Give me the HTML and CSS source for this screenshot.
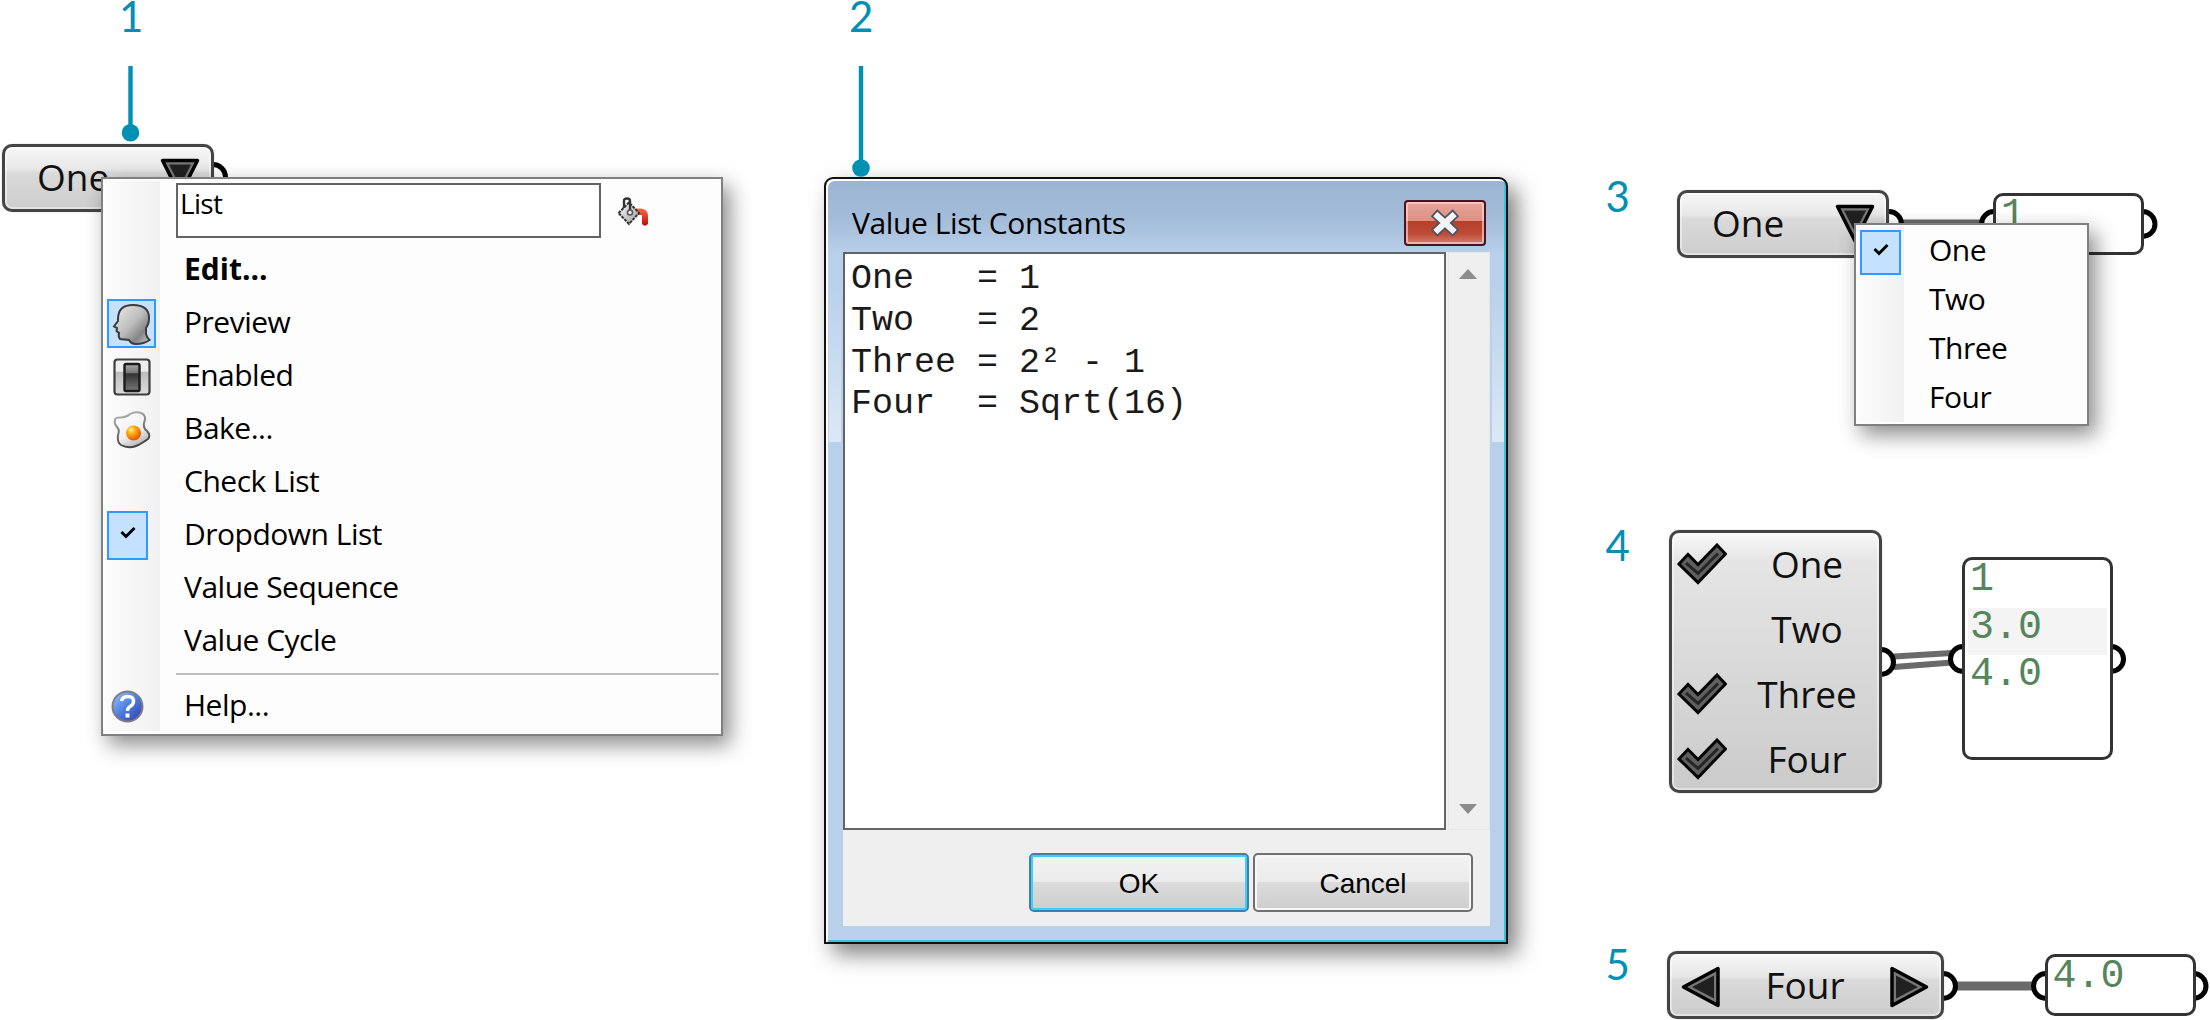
FILE: index.html
```html
<!DOCTYPE html>
<html lang="en">
<head>
<meta charset="utf-8">
<title>Value List</title>
<link rel="stylesheet" href="styles.css">
</head>
<body>
<main class="canvas">
  <svg class="wires" width="2210" height="1020" viewBox="0 0 2210 1020">
    <g class="link">
      <path d="M1903 224H1982" stroke-width="9"/>
      <path d="M1894 656.500L1952 653M1894 667L1952 662.500" stroke-width="6"/>
      <path d="M1956 986H2034" stroke-width="9"/>
    </g>
    <g class="port">
      <circle cx="213" cy="177" r="12.500"/>
      <circle cx="1889" cy="224" r="12.500"/><circle cx="1994" cy="224" r="12.500"/><circle cx="2142.500" cy="224" r="12.500"/>
      <circle cx="1881" cy="662" r="12.500"/><circle cx="1963" cy="659" r="12.500"/><circle cx="2111" cy="659" r="12.500"/>
      <circle cx="1943" cy="986" r="12.500"/><circle cx="2046" cy="986" r="12.500"/><circle cx="2193.500" cy="986" r="12.500"/>
    </g>
  </svg>

  <div class="mark mark-1">1</div>
  <div class="mark mark-2">2</div>
  <div class="mark mark-3">3</div>
  <div class="mark mark-4">4</div>
  <div class="mark mark-5">5</div>

  <section class="node drop drop-a">
    <span class="name">One</span>
    <svg class="tri" width="40" height="40" viewBox="0 0 40 40"><path class="tri-out" d="M2.500 2.500H37.500L20 37z"/><path class="tri-in" d="M9 6.500H31L20 28z"/></svg>
  </section>
  <section class="node drop drop-b">
    <span class="name">One</span>
    <svg class="tri" width="40" height="40" viewBox="0 0 40 40"><path class="tri-out" d="M2.500 2.500H37.500L20 37z"/><path class="tri-in" d="M9 6.500H31L20 28z"/></svg>
  </section>
  <section class="node checks">
    <div class="check-row"><svg class="tick" viewBox="0 0 50 42"><path class="tick-out" d="M2 21L11 11.500L21 21.500L40 2L48.500 11L21 39.500z"/><path class="tick-in" d="M9 20L21 30.500L41 10.500"/></svg><span class="name">One</span></div>
    <div class="check-row"><i class="tick"></i><span class="name">Two</span></div>
    <div class="check-row"><svg class="tick" viewBox="0 0 50 42"><path class="tick-out" d="M2 21L11 11.500L21 21.500L40 2L48.500 11L21 39.500z"/><path class="tick-in" d="M9 20L21 30.500L41 10.500"/></svg><span class="name">Three</span></div>
    <div class="check-row"><svg class="tick" viewBox="0 0 50 42"><path class="tick-out" d="M2 21L11 11.500L21 21.500L40 2L48.500 11L21 39.500z"/><path class="tick-in" d="M9 20L21 30.500L41 10.500"/></svg><span class="name">Four</span></div>
  </section>
  <section class="node cycle">
    <svg width="40" height="42" viewBox="0 0 40 42"><path class="tri-out" d="M2.500 21L37 2.500V39.500z"/><path class="tri-in" d="M11 21L33 9.500V32.500z"/></svg>
    <span class="name">Four</span>
    <svg width="40" height="42" viewBox="0 0 40 42"><path class="tri-out" d="M37.500 21L3 2.500V39.500z"/><path class="tri-in" d="M29 21L7 9.500V32.500z"/></svg>
  </section>

  <section class="panel panel-3"><div>1</div></section>
  <section class="panel panel-4"><div>1</div><div class="alt">3.0</div><div>4.0</div></section>
  <section class="panel panel-5"><div>4.0</div></section>

  <section class="menu context">
    <div class="field-row">
      <div class="field">List</div>
      <svg class="paint" width="34" height="32" viewBox="0 0 34 32">
        <defs>
          <linearGradient id="steel" x1="0" y1="0" x2="1" y2="1"><stop offset="0" stop-color="#fff"/><stop offset="1" stop-color="#999"/></linearGradient>
          <linearGradient id="red" x1="0" y1="0" x2="0" y2="1"><stop offset="0" stop-color="#ff6a45"/><stop offset="1" stop-color="#c00c0c"/></linearGradient>
        </defs>
        <path d="M17 11.500H24Q31 12 31 19V27Q28 30.500 25 27V18H19z" fill="url(#red)"/>
        <path d="M1.500 16L12 5.500L22 16L12 27z" fill="url(#steel)" stroke="#333" stroke-width="2" stroke-dasharray="3 1"/>
        <path d="M7 11V4Q7 1.500 10 1.500Q13 1.500 13 4V14" fill="none" stroke="#333" stroke-width="2.400"/>
        <circle cx="13" cy="15.500" r="2.500" fill="#eee" stroke="#555" stroke-width="1.500"/>
      </svg>
    </div>
    <div class="item strong"><span class="glyph"></span>Edit...</div>
    <div class="item"><span class="glyph on">
      <svg width="40" height="42" viewBox="0 0 40 42">
        <defs><linearGradient id="head" x1="0" y1="0" x2="1" y2="1"><stop offset="0" stop-color="#eee"/><stop offset=".5" stop-color="#bcbcbc"/><stop offset=".75" stop-color="#858585"/><stop offset="1" stop-color="#ccc"/></linearGradient></defs>
        <path d="M6 16Q6 2 21 2Q37 2 37 15Q37 21 34 25V31Q35 35 37.500 37Q32 41 24 41Q19 41 17 37L8 36Q6 34 7 30L4.500 28L5 25L2 23.500L6 18z" fill="url(#head)" stroke="#3c3c3c" stroke-width="2"/>
      </svg></span>Preview</div>
    <div class="item"><span class="glyph">
      <svg width="38" height="38" viewBox="0 0 38 38">
        <defs><linearGradient id="plate" x1="0" y1="0" x2="0" y2="1"><stop offset="0" stop-color="#eee"/><stop offset=".34" stop-color="#eee"/><stop offset=".35" stop-color="#bbb"/><stop offset="1" stop-color="#ddd"/></linearGradient><linearGradient id="rocker" x1="0" y1="0" x2="0" y2="1"><stop offset="0" stop-color="#aaa"/><stop offset=".33" stop-color="#777"/><stop offset=".36" stop-color="#333"/><stop offset="1" stop-color="#777"/></linearGradient></defs>
        <rect x="1.500" y="1.500" width="35" height="35" rx="3" fill="url(#plate)" stroke="#3e3e3e" stroke-width="2.200"/>
        <rect x="11.500" y="6" width="15" height="27" rx="1.500" fill="url(#rocker)" stroke="#1c1c1c" stroke-width="2.400"/>
      </svg></span>Enabled</div>
    <div class="item"><span class="glyph">
      <svg width="38" height="38" viewBox="0 0 38 38">
        <defs><linearGradient id="white" x1="0" y1="0" x2=".5" y2="1"><stop offset="0" stop-color="#fff"/><stop offset=".7" stop-color="#f0f0f0"/><stop offset="1" stop-color="#bbb"/></linearGradient><linearGradient id="rim" x1="0" y1="0" x2=".3" y2="1"><stop offset="0" stop-color="#bbb"/><stop offset="1" stop-color="#444"/></linearGradient><radialGradient id="yolk" cx=".35" cy=".3" r=".75"><stop offset="0" stop-color="#fff0a0"/><stop offset=".35" stop-color="#ffb010"/><stop offset="1" stop-color="#e84800"/></radialGradient></defs>
        <path d="M2 9Q2 6 9 6.500Q14 6 17 3Q22 0 28 2Q34 4 31 12Q30 17 34 20Q38 24 35 28Q28 33 23 35Q15 38 8 34Q4 31 5 24Q7 19 4 16Q1 13 2 9z" fill="url(#white)" stroke="url(#rim)" stroke-width="2"/>
        <circle cx="20.500" cy="22" r="7.500" fill="url(#yolk)"/>
      </svg></span>Bake...</div>
    <div class="item"><span class="glyph"></span>Check List</div>
    <div class="item"><span class="glyph on slim"><svg width="16" height="14" viewBox="0 0 16 14"><path class="mini" d="M1.500 6L6 10.500L14.500 2"/></svg></span>Dropdown List</div>
    <div class="item"><span class="glyph"></span>Value Sequence</div>
    <div class="item"><span class="glyph"></span>Value Cycle</div>
    <hr class="rule">
    <div class="item"><span class="glyph help">
      <svg width="33" height="33" viewBox="0 0 33 33">
        <defs><linearGradient id="orb" x1="0" y1="0" x2="1" y2="1"><stop offset="0" stop-color="#9cc4ff"/><stop offset=".5" stop-color="#4a7de0"/><stop offset="1" stop-color="#3636a8"/></linearGradient></defs>
        <circle cx="16.500" cy="16.500" r="15" fill="url(#orb)" stroke="#7c7c86" stroke-width="2"/>
        <path d="M10.500 11Q11.500 6.500 17 6.500Q22.500 6.500 22.500 11.500Q22.500 14.500 19 16.500Q16.500 18 16.500 21" fill="none" stroke="#fff" stroke-width="3.400"/><rect x="14.500" y="23.500" width="4" height="4" fill="#fff"/>
      </svg></span>Help...</div>
  </section>

  <section class="menu picker">
    <div class="item"><span class="glyph on slim"><svg width="16" height="14" viewBox="0 0 16 14"><path class="mini" d="M1.500 6L6 10.500L14.500 2"/></svg></span>One</div>
    <div class="item"><span class="glyph"></span>Two</div>
    <div class="item"><span class="glyph"></span>Three</div>
    <div class="item"><span class="glyph"></span>Four</div>
  </section>

  <section class="dialog">
    <header class="titlebar">
      <h1 class="title">Value List Constants</h1>
      <div class="close"><svg width="30" height="28" viewBox="0 0 30 28"><path d="M7.500 7L22.500 21M22.500 7L7.500 21" stroke="#4d5366" stroke-width="9.500" stroke-linecap="square"/><path d="M7.500 7L22.500 21M22.500 7L7.500 21" stroke="#f3f3f3" stroke-width="6" stroke-linecap="square"/></svg></div>
    </header>
    <div class="client">
      <div class="editor">
        <pre class="code">One   = 1
Two   = 2
Three = 2² - 1
Four  = Sqrt(16)</pre>
        <div class="scroll">
          <svg width="20" height="12" viewBox="0 0 20 12"><path d="M1 11L10 1L19 11z" fill="#8c8c8c"/></svg>
          <svg width="20" height="12" viewBox="0 0 20 12"><path d="M1 1L10 11L19 1z" fill="#8c8c8c"/></svg>
        </div>
      </div>
      <footer class="actions">
        <div class="button primary">OK</div>
        <div class="button">Cancel</div>
      </footer>
    </div>
  </section>

  <svg class="pins" width="900" height="180" viewBox="0 0 900 180">
    <path d="M130.500 66V133M861 66V168"/>
    <circle cx="130.500" cy="132.800" r="8.800"/><circle cx="861" cy="168" r="8.800"/>
  </svg>
</main>
</body>
</html>
```
FILE: styles.css
```css
* { box-sizing: border-box; }
body { margin: 0; background: #fff; }
svg { display: block; flex: none; }

.canvas {
  position: relative;
  width: 2210px;
  height: 1020px;
  overflow: hidden;
  font-family: "Open Sans", "Noto Sans", sans-serif;
  color: #000;
}
.wires, .pins, .mark, .node, .panel, .menu, .dialog { position: absolute; }
.wires, .pins { left: 0; top: 0; }
.link path { fill: none; stroke: #6a6a6a; }
.port circle { fill: #fff; stroke: #000; stroke-width: 5; }
.pins path { stroke: #0090b4; stroke-width: 4.4; }
.pins circle { fill: #0090b4; }

/* Callout numbers */
.mark { font: 42px/32px Lato, sans-serif; color: #0090b4; }
.mark-1 { left: 119px; top: 0; }
.mark-2 { left: 849px; top: 0; }
.mark-3 { left: 1605.5px; top: 180px; }
.mark-4 { left: 1605.5px; top: 529px; }
.mark-5 { left: 1605.5px; top: 948px; }

/* Components */
.node {
  border: 3px solid #444;
  border-radius: 10px;
  background: linear-gradient(#f7f7f7, #e8e8e8 35%, #dadada 42%, #cdcdcd);
  box-shadow: inset 0 0 0 2px rgba(255, 255, 255, .45), 0 0 1px #777;
  font-size: 37px;
  color: #111;
}
.name { line-height: 60px; }
.drop { width: 212px; height: 68px; display: flex; justify-content: space-between; padding: 0 11px 0 32px; }
.drop-a { left: 2px; top: 144px; }
.drop-b { left: 1677px; top: 190px; }
.drop .tri { margin-top: 11px; }
.checks {
  left: 1669px; top: 530px; width: 213px; height: 263px;
  padding: 0 5px;
  background: linear-gradient(#f9f9f9, #e5e5e5 11%, #cbcbcb);
}
.check-row { display: flex; align-items: flex-start; height: 65px; padding-top: 10px; }
.tick { width: 50px; height: 42px; flex: none; }
.check-row .name { flex: 1; margin-top: -9px; text-align: center; padding-left: 13px; }
.cycle { left: 1667px; top: 951px; width: 277px; height: 68px; display: flex; align-items: center; justify-content: space-between; padding: 3px 12px 0 11px; }
.cycle .name { margin-top: -4px; }
.tri-out { fill: #777; stroke: #000; stroke-width: 3.5; stroke-linejoin: round; }
.tri-in { fill: #202020; }
.tick-out { fill: #606060; stroke: #050505; stroke-width: 3; }
.tick-in { fill: none; stroke: #252525; stroke-width: 3; }

/* Output panels */
.panel {
  width: 151px; height: 62px;
  padding: 0 3px;
  border: 3px solid #333;
  border-radius: 10px;
  background: #fff;
  font: 40px/39px "Liberation Mono", monospace;
  color: #55855c;
}
.panel div { padding-left: 2px; height: 47.5px; }
.panel-3 { left: 1993px; top: 193px; }
.panel-4 { left: 1962px; top: 557px; height: 203px; }
.panel-5 { left: 2044.5px; top: 954px; }
.panel .alt { background: #f4f4f4; }

/* Popup menus */
.menu {
  border: 2px solid #808080;
  background: #fdfdfd;
  box-shadow: 7px 9px 20px rgba(0, 0, 0, .45);
  font-size: 30px;
}
.context {
  left: 101px; top: 177px; width: 622px; height: 559px;
  background: linear-gradient(90deg, #fcfcfc, #f1f1f1) 2px 2px / 55px 550px no-repeat #fdfdfd;
}
.field-row { display: flex; height: 63px; padding: 4px 0 0 73px; }
.field { width: 425px; height: 55px; padding-left: 2px; border: 2px solid #646464; background: #fff; font-size: 28px; line-height: 37px; letter-spacing: -.7px; }
.paint { margin: 14px 0 0 16px; }
.item { display: flex; align-items: center; height: 53px; letter-spacing: -.5px; white-space: pre; }
.glyph { display: flex; align-items: center; justify-content: center; flex: none; width: 49px; height: 49px; margin: 4px 28px 0 4px; }
.on { border: 2px solid #3399ff; background: #c4e1ff; }
.slim { width: 41px; margin-right: 36px; }
.slim svg { margin-bottom: 6px; }
.help svg { margin-right: 9px; margin-bottom: 0; }
.strong { font-weight: 700; letter-spacing: 0; }
.rule { margin: 7px 2px 3px 73px; height: 2px; border: 0; background: #bdbdbd; }
.mini { fill: none; stroke: #000; stroke-width: 3; }
.picker {
  left: 1854px; top: 223px; width: 235px; height: 203px;
  background: linear-gradient(90deg, #fcfcfc, #f1f1f1) 2px 2px / 46px 195px no-repeat #fdfdfd;
}
.picker .item { height: 49px; }
.picker .glyph { width: 41px; height: 45px; margin: 6px 28px 0 4px; }

/* Constants dialog */
.dialog {
  left: 824px; top: 177px; width: 684px; height: 767px;
  border: 2px solid #111;
  border-radius: 9px 9px 0 0;
  padding: 4px 16px 17px 17px;
  background:
    linear-gradient(rgba(220, 232, 245, 0), #dce8f5) 3px 103px / 12px 160px no-repeat,
    linear-gradient(rgba(220, 232, 245, 0), #dce8f5) 666px 103px / 12px 160px no-repeat,
    linear-gradient(#9ab4d2, #a3bcd9 40px, #b9d0ea 75px);
  box-shadow: inset 2px 2px #fff, inset -2px -2px #35c4e0, 9px 10px 22px rgba(0, 0, 0, .5);
}
.titlebar { display: flex; justify-content: space-between; height: 69px; }
.title { margin: 19px 0 0 9px; font-size: 30px; line-height: 42px; font-weight: 400; letter-spacing: -.4px; }
.close {
  display: flex; align-items: center; justify-content: center;
  width: 82px; height: 46px; margin: 17px 4px 0 0;
  border: 2px solid #4b1220; border-radius: 4px;
  background: linear-gradient(#e8a498, #dd9084 45%, #b5402a 46%, #bd4a35 75%, #d5806f);
  box-shadow: inset 0 0 0 2px rgba(255, 215, 205, .65);
}
.client { height: 674px; background: #efefef; }
.editor { display: flex; justify-content: space-between; height: 578px; }
.code { width: 603px; margin: 0; padding: 5px 6px; border: 2px solid #646464; background: #fff; font: 35px/41.8px "Liberation Mono", monospace; color: #1a1a1a; }
.scroll { display: flex; flex-direction: column; align-items: center; justify-content: space-between; width: 42px; padding: 15px 2px 14px 0; border: 1px solid #e7e7e7; }
.actions { display: flex; justify-content: flex-end; gap: 4px; padding: 23px 17px 0 0; }
.button {
  width: 220px; height: 59px;
  border: 2px solid #707070; border-radius: 5px;
  background: linear-gradient(#f3f3f3, #ebebeb 48%, #dcdcdc 50%, #cdcdcd);
  box-shadow: inset 0 0 0 2px #f7f7f7;
  font: 28px/57px "Liberation Sans", sans-serif;
  text-align: center;
}
.primary { border-color: #3c7fb1; box-shadow: inset 0 0 0 2px #42cdf4; }
```
